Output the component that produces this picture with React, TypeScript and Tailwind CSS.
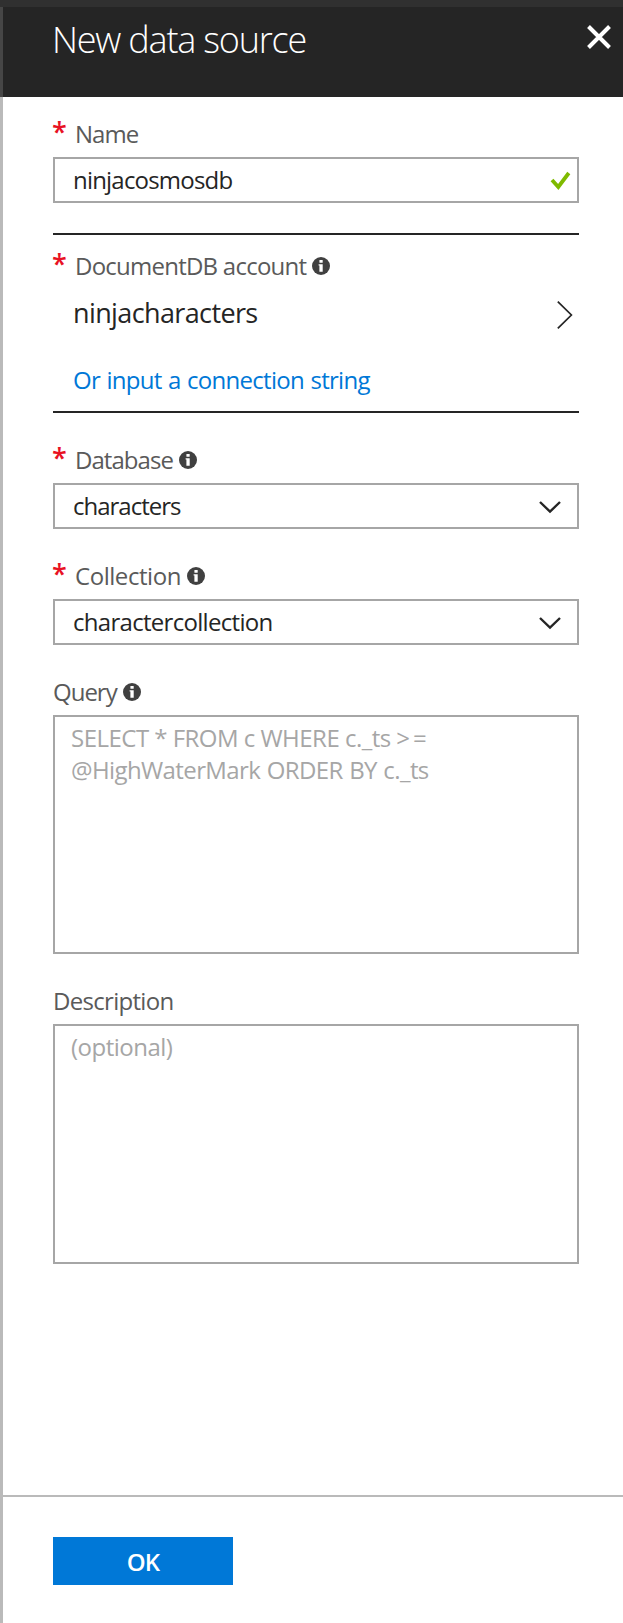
import React, { type ReactNode } from 'react';

function InfoIcon() {
  return (
    <svg width="18" height="18" viewBox="0 0 18 18" className="ml-1.5 shrink-0">
      <circle cx="9" cy="9" r="9" fill="#404040" />
      <rect x="7.4" y="3" width="3.3" height="2.8" rx="0.6" fill="#fff" />
      <path d="M6.6 7.2H10.7V14.8H7.4V8.6H6.6Z" fill="#fff" />
    </svg>
  );
}

function ChevronDown() {
  return (
    <svg width="24" height="14" viewBox="0 0 24 14" fill="none" className="mt-px mr-[15px] shrink-0">
      <path d="M2 2L12 11.6L22 2" stroke="#252525" strokeWidth="2.4" />
    </svg>
  );
}

type LabelProps = { children: ReactNode; required?: boolean; info?: boolean };

function Label({ children, required = false, info = false }: LabelProps) {
  return (
    <div className="flex h-8 items-center text-2xl leading-8 text-[#5a5a5a]">
      {required && (
        <span className="mb-1 -ml-px w-[23px] shrink-0 text-[27px] leading-[28px] font-semibold text-[#e81123]">*</span>
      )}
      {children}
      {info && <InfoIcon />}
    </div>
  );
}

function Field({ children }: { children: ReactNode }) {
  return (
    <div className="mt-[7px] flex h-[46px] items-center justify-between border-2 border-[#a6a6a6] pl-[18px] text-2xl text-[#252525]">
      {children}
    </div>
  );
}

export default function App() {
  return (
    <div className="flex h-[1623px] w-[623px] flex-col bg-white font-['Open_Sans','Noto_Sans',sans-serif]">
      <div className="h-[7px] shrink-0 bg-[#303030]" />
      <header className="flex h-[90px] shrink-0 items-start justify-between border-l-3 border-[#464646] bg-[#252525] pt-[7px] pr-2.5 pl-[49px]">
        <h1 className="pt-0.5 text-4xl leading-[48px] font-light tracking-[-1.2px] text-white">New data source</h1>
        <svg width="28" height="28" viewBox="0 0 28 28" fill="none" className="mt-[9px]">
          <path d="M3.5 3.5L24.5 24.5M24.5 3.5L3.5 24.5" stroke="#fff" strokeWidth="4" />
        </svg>
      </header>

      <div className="flex flex-1 flex-col border-l-3 border-[#bababa]">
        <main className="flex-1 pt-[21px] pr-11 pl-[50px]">
          <Label required>
            <span className="tracking-[-1px]">Name</span>
          </Label>
          <Field>
            <span className="pb-px tracking-[-0.8px]">ninjacosmosdb</span>
            <svg width="24" height="20" viewBox="0 0 24 20" fill="none" className="mt-[2px] mr-[4px]">
              <path d="M3 9L9.3 16L19.8 2" stroke="#7fba00" strokeWidth="3.8" />
            </svg>
          </Field>

          <section className="mt-[30px] border-y-2 border-[#252525] pt-[15px] pb-[15px]">
            <Label required info>
              <span className="tracking-[-0.76px]">DocumentDB account</span>
            </Label>
            <div className="mt-[11px] flex h-10 items-center justify-between pl-5 text-[27px] leading-10 text-[#252525]">
              <span className="tracking-[-0.62px]">ninjacharacters</span>
              <svg width="18" height="30" viewBox="0 0 18 30" fill="none" className="mt-[3px] mr-[5px]">
                <path d="M1.8 1.6L15.4 15L1.8 28.4" stroke="#252525" strokeWidth="1.7" />
              </svg>
            </div>
            <a className="mt-[31px] block pl-5 text-2xl leading-8 tracking-[-0.7px] [word-spacing:0.8px] text-[#0078d7]">
              Or input a connection string
            </a>
          </section>

          <div className="mt-[31px]">
            <Label required info>
              <span className="tracking-[-0.95px]">Database</span>
            </Label>
            <Field>
              <span className="tracking-[-1px]">characters</span>
              <ChevronDown />
            </Field>
          </div>

          <div className="mt-[31px]">
            <Label required info>
              <span className="tracking-[-0.45px]">Collection</span>
            </Label>
            <Field>
              <span className="tracking-[-0.7px]">charactercollection</span>
              <ChevronDown />
            </Field>
          </div>

          <div className="mt-[31px]">
            <Label info>
              <span className="tracking-[-1px]">Query</span>
            </Label>
            <div className="mt-[7px] h-[239px] border-2 border-[#a6a6a6] px-4 pt-[5px] text-2xl leading-8 text-[#a6a6a6]">
              <div className="tracking-[-0.52px]">
                {'SELECT * FROM c WHERE c._ts '}
                <span className="tracking-[3px]">{'>='}</span>
              </div>
              <div className="tracking-[-0.6px] [word-spacing:0.8px]">@HighWaterMark ORDER BY c._ts</div>
            </div>
          </div>

          <div className="mt-[31px]">
            <Label>
              <span className="tracking-[-0.7px]">Description</span>
            </Label>
            <div className="mt-[7px] h-60 border-2 border-[#a6a6a6] px-4 pt-[5px] text-2xl leading-8 tracking-[-0.5px] text-[#a6a6a6]">
              (optional)
            </div>
          </div>
        </main>

        <footer className="h-32 shrink-0 border-t-2 border-[#bababa] pt-10 pl-[50px]">
          <button className="flex h-12 w-[180px] items-center justify-center bg-[#0078d7] pt-0.5 text-2xl font-semibold tracking-[-0.9px] text-white">
            OK
          </button>
        </footer>
      </div>
    </div>
  );
}
